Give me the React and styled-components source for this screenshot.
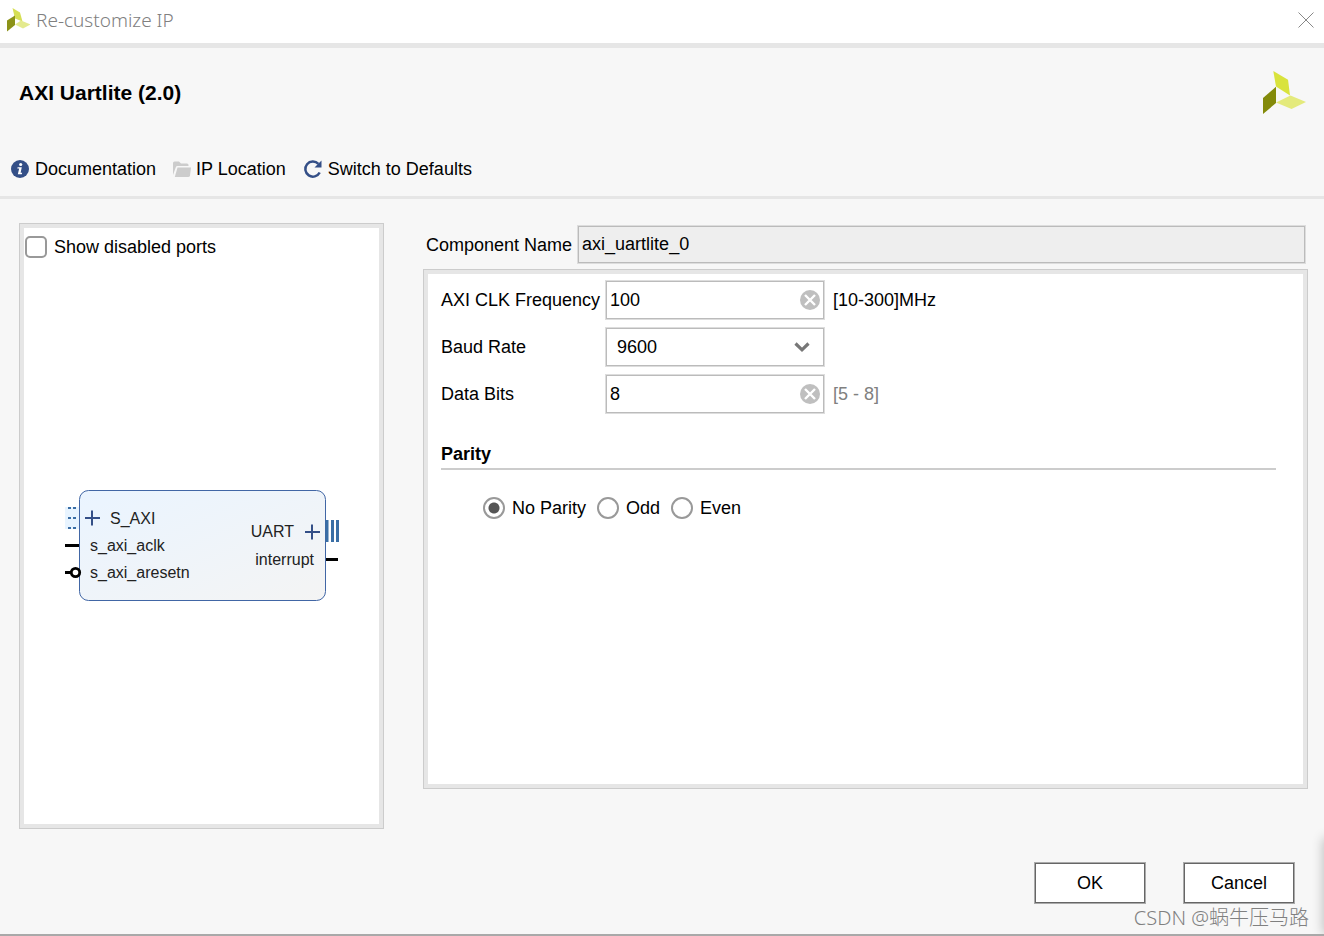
import { useState } from 'react';
import styled, { createGlobalStyle } from 'styled-components';

const GlobalStyle = createGlobalStyle`
  *, *::before, *::after {
    box-sizing: border-box;
  }

  body {
    margin: 0;
    background: #f7f7f7;
    color: #000;
    font-family: 'Liberation Sans', Arial, sans-serif;
    font-size: 18px;
    line-height: 22px;
  }

  input, select, button {
    font: inherit;
    color: inherit;
  }
`;

const Dialog = styled.div`
  position: relative;
  display: flex;
  flex-direction: column;
  min-height: 100vh;
  overflow: hidden;
  border-bottom: 2px solid #a9a9a9;
  background: #f7f7f7;

  /* shadow of the window behind, along the right edge */
  &::after {
    content: '';
    position: absolute;
    right: -8px;
    bottom: 0;
    width: 8px;
    height: 96px;
    box-shadow: 0 0 12px rgba(0, 0, 0, 0.3);
  }
`;

const TitleBar = styled.header`
  display: flex;
  align-items: center;
  gap: 6px;
  height: 48px;
  padding: 0 10px 4px 6px;
  border-bottom: 5px solid #e6e6e6;
  background: #fff;
`;

const WindowTitle = styled.span`
  flex: 1;
  color: #808080;
  font-family: 'Noto Sans', sans-serif;
  font-size: 19px;
  font-weight: 300;
`;

const IconButton = styled.button`
  display: flex;
  padding: 0;
  border: 0;
  background: none;
  cursor: pointer;
`;

const Heading = styled.section`
  display: flex;
  align-items: center;
  justify-content: space-between;
  padding: 23px 18px 0 19px;

  h1 {
    margin: 0;
    font-size: 21px;
    font-weight: 700;
  }
`;

const Toolbar = styled.nav`
  display: flex;
  align-items: center;
  gap: 17px;
  padding: 44px 10px 16px;
  border-bottom: 3px solid #e6e6e6;
`;

const ToolLink = styled.a`
  display: flex;
  align-items: center;
  gap: 5px;
  color: #000;
  text-decoration: none;
`;

const Body = styled.main`
  flex: 1;
  display: grid;
  grid-template-columns: 365px 1fr;
  gap: 39px;
  padding: 24px 16px 0 19px;
`;

const Panel = styled.section`
  display: flex;
  flex-direction: column;
  flex: 1;
  border: 1px solid #ccc;
  background: #fff;
  box-shadow: inset 0 0 0 4px #e6e6e6;
`;

const PortsPanel = styled(Panel)`
  padding: 12px 5px 5px;
`;

const CheckLabel = styled.label`
  display: flex;
  align-items: center;
  gap: 7px;
`;

const Checkbox = styled.input`
  appearance: none;
  width: 22px;
  height: 22px;
  margin: 0;
  border: 2px solid #999;
  border-radius: 5px;
  background: #fff;

  &:checked {
    background: #999;
  }
`;

const Preview = styled.div`
  flex: 1;
  display: flex;
  align-items: center;
  justify-content: center;
  padding: 10px 0 0 2px;
`;

const Settings = styled.div`
  display: flex;
  flex-direction: column;
  padding: 2px 0 40px;
`;

const NameRow = styled.div`
  display: flex;
  align-items: center;
  gap: 5px;
  margin-bottom: 5px;
  padding: 0 2px 0 3px;
`;

const NameInput = styled.input`
  flex: 1;
  min-width: 0;
  height: 39px;
  padding: 0 4px;
  border: 1px solid #ddd;
  background: #eee;
  box-shadow: inset 0 0 0 1px #bbb;
`;

const ParamsPanel = styled(Panel)`
  padding: 10px 31px 10px 17px;
`;

const Params = styled.div`
  display: grid;
  grid-template-columns: 156px 220px 1fr;
  align-items: center;
  column-gap: 8px;
  row-gap: 7px;

  label {
    white-space: nowrap;
  }
`;

const Field = styled.div`
  display: flex;
  align-items: center;
  height: 40px;
  padding: 0 4px 0 1px;
  border: 1px solid #ddd;
  background: #fff;
  box-shadow: inset 0 0 0 1px #bbb;
`;

const FieldInput = styled.input`
  flex: 1;
  min-width: 0;
  height: 36px;
  padding: 0 3px;
  border: 0;
  outline: 0;
  background: none;
`;

const SelectWrap = styled.div`
  position: relative;
  grid-column: 2 / 3;

  svg {
    position: absolute;
    top: 14px;
    right: 15px;
    pointer-events: none;
  }
`;

const Select = styled.select`
  appearance: none;
  display: block;
  width: 100%;
  height: 40px;
  padding: 0 11px;
  border: 1px solid #ddd;
  border-radius: 0;
  background: #fff;
  box-shadow: inset 0 0 0 1px #bbb;
`;

const Range = styled.span`
  color: ${({ $muted }) => ($muted ? '#808080' : '#000')};
`;

const ParityGroup = styled.fieldset`
  margin: 29px 0 0;
  padding: 0;
  border: 0;

  legend {
    width: 100%;
    padding: 0 0 3px;
    border-bottom: 2px solid #ccc;
    font-weight: 700;
  }
`;

const RadioRow = styled.div`
  display: flex;
  gap: 11px;
  padding: 27px 42px 0;

  label {
    display: flex;
    align-items: center;
    gap: 7px;
  }
`;

const Radio = styled.input`
  appearance: none;
  width: 22px;
  height: 22px;
  margin: 0;
  border: 2px solid #999;
  border-radius: 50%;
  background: #fff;

  &:checked {
    background: radial-gradient(circle, #555 5px, #fff 6px);
  }
`;

const Footer = styled.footer`
  display: flex;
  justify-content: flex-end;
  gap: 37px;
  padding: 33px 29px 30px;
`;

const ActionButton = styled.button`
  width: 112px;
  height: 42px;
  padding: 0;
  border: 1px solid #aaa;
  background: #fff;
  box-shadow: inset 0 0 0 1px #666;
  cursor: pointer;
`;

const Watermark = styled.span`
  position: absolute;
  right: 15px;
  bottom: 5px;
  color: #808080;
  font-family: 'Noto Sans', 'Noto Sans CJK SC', sans-serif;
  font-size: 20px;
  font-weight: 300;
  pointer-events: none;
`;

const Logo = ({ size, ...rest }) => (
  <svg width={size} height={size} viewBox="0 0 43 43" aria-hidden="true" {...rest}>
    <path d="M10.3 0 L25 8.7 L27 24.5 L13 15.5 Z" fill="#d9e33c" />
    <path d="M13 15.8 V32 L0 43 V27 Z" fill="#838a0a" />
    <path d="M13 31.5 L27.5 24.5 L43 31 L28.5 38 Z" fill="#e4ea7c" />
  </svg>
);

// the title bar version has wider blades that meet in the middle
const SmallLogo = () => (
  <svg width="24" height="24" viewBox="0 0 24 24" aria-hidden="true">
    <path d="M6.5 0 L14 4.5 L16.5 13.5 L9 10.5 Z" fill="#d6df55" />
    <path d="M9 7.5 V17 L1 23.5 V12.5 Z" fill="#8c9318" />
    <path d="M9 16.5 L15 12.5 L24.5 16.5 L17 20.5 Z" fill="#e4ea8e" />
  </svg>
);

const CloseIcon = () => (
  <svg width="16" height="16" viewBox="0 0 16 16" fill="none" stroke="#888" aria-hidden="true">
    <path d="M0.5 0.5 L15.5 15.5 M15.5 0.5 L0.5 15.5" />
  </svg>
);

const InfoIcon = () => (
  <svg width="20" height="20" viewBox="0 0 20 20" aria-hidden="true">
    <circle cx="10" cy="10" r="9" fill="#344f87" />
    <circle cx="10.7" cy="5.5" r="1.6" fill="#fff" />
    <path d="M7.6 8.2 H11.8 L10.6 13.8 H12.2 L11.8 15.2 H7.8 L9.2 9.6 H7.3 Z" fill="#fff" />
  </svg>
);

const FolderIcon = () => (
  <svg width="18" height="18" viewBox="0 0 18 18" fill="#ccc" aria-hidden="true">
    <path d="M0 15 V3 Q0 1.5 1.5 1.5 H6 L8 3.5 H14 Q15.5 3.5 15.5 5 V6 H4.5 Q3.2 6 2.8 7.2 Z" />
    <path d="M4.5 7.5 H18 L17 15.5 Q16.7 17 15.2 17 H1.8 Z" />
  </svg>
);

const ResetIcon = () => (
  <svg width="20" height="20" viewBox="0 0 20 20" aria-hidden="true">
    <path d="M16.7 13.5 A7.6 7.6 0 1 1 15.4 4.8" fill="none" stroke="#344f87" strokeWidth="2.5" />
    <path d="M18.5 1.5 V8.5 H11.5 Z" fill="#344f87" />
  </svg>
);

const ClearIcon = () => (
  <svg width="20" height="20" viewBox="0 0 20 20" aria-hidden="true">
    <circle cx="10" cy="10" r="10" fill="#bfbfbf" />
    <path d="M5 5 L15 15 M15 5 L5 15" stroke="#fff" strokeWidth="2.4" />
  </svg>
);

const ChevronIcon = () => (
  <svg width="16" height="12" viewBox="0 0 16 12" fill="none" aria-hidden="true">
    <path d="M1.5 2.5 L8 8.8 L14.5 2.5" stroke="#777" strokeWidth="3.2" />
  </svg>
);

const BlockDiagram = () => (
  <svg
    width="276"
    height="112"
    viewBox="0 0 276 112"
    fontFamily="'Liberation Sans', Arial, sans-serif"
    fontSize="16"
    fill="#222"
  >
    <defs>
      <linearGradient id="block" x1="0" y1="0" x2="1" y2="1">
        <stop offset="0" stopColor="#eaf4ff" />
        <stop offset="1" stopColor="#f4f4f4" />
      </linearGradient>
    </defs>
    <rect x="0" y="17" width="14" height="22" fill="#e8f4ff" />
    <path d="M3 18 H11 M3 28 H11 M3 38 H11" stroke="#3a6ea5" strokeWidth="2" strokeDasharray="3 2" />
    <rect x="14.5" y="0.5" width="246" height="110" rx="9" fill="url(#block)" stroke="#4166a5" />
    <path d="M20 28 H35 M27 20.5 V35.5 M240 42 H255 M247 34.5 V49.5" stroke="#344f87" strokeWidth="2" />
    <path d="M0 55.5 H14 M261 69.5 H273 M0 82.5 H6" stroke="#000" strokeWidth="3" />
    <circle cx="10.5" cy="82.5" r="4.2" fill="#fff" stroke="#000" strokeWidth="2.8" />
    <path d="M262 30 V52 M267.5 30 V52 M272.5 30 V52" stroke="#3a6ea5" strokeWidth="3" />
    <text x="45" y="34">S_AXI</text>
    <text x="25" y="61">s_axi_aclk</text>
    <text x="25" y="88">s_axi_aresetn</text>
    <text x="229" y="47" textAnchor="end">UART</text>
    <text x="249" y="75" textAnchor="end">interrupt</text>
  </svg>
);

const ClearableField = ({ id, value, onChange }) => (
  <Field>
    <FieldInput id={id} value={value} onChange={(e) => onChange(e.target.value)} />
    <IconButton type="button" aria-label="Clear" onClick={() => onChange('')}>
      <ClearIcon />
    </IconButton>
  </Field>
);

const PARITY = ['No Parity', 'Odd', 'Even'];

const App = () => {
  const [showDisabled, setShowDisabled] = useState(false);
  const [clock, setClock] = useState('100');
  const [baud, setBaud] = useState('9600');
  const [dataBits, setDataBits] = useState('8');
  const [parity, setParity] = useState('No Parity');

  return (
    <>
      <GlobalStyle />
      <Dialog>
        <TitleBar>
          <SmallLogo />
          <WindowTitle>Re-customize IP</WindowTitle>
          <IconButton type="button" aria-label="Close">
            <CloseIcon />
          </IconButton>
        </TitleBar>

        <Heading>
          <h1>AXI Uartlite (2.0)</h1>
          <Logo size={43} />
        </Heading>

        <Toolbar>
          <ToolLink href="#documentation">
            <InfoIcon />
            Documentation
          </ToolLink>
          <ToolLink href="#location">
            <FolderIcon />
            IP Location
          </ToolLink>
          <ToolLink href="#defaults">
            <ResetIcon />
            Switch to Defaults
          </ToolLink>
        </Toolbar>

        <Body>
          <PortsPanel>
            <CheckLabel>
              <Checkbox
                type="checkbox"
                checked={showDisabled}
                onChange={(e) => setShowDisabled(e.target.checked)}
              />
              Show disabled ports
            </CheckLabel>
            <Preview>
              <BlockDiagram />
            </Preview>
          </PortsPanel>

          <Settings>
            <NameRow>
              <label htmlFor="component-name">Component Name</label>
              <NameInput id="component-name" value="axi_uartlite_0" readOnly />
            </NameRow>

            <ParamsPanel>
              <Params>
                <label htmlFor="clock">AXI CLK Frequency</label>
                <ClearableField id="clock" value={clock} onChange={setClock} />
                <Range>[10-300]MHz</Range>

                <label htmlFor="baud">Baud Rate</label>
                <SelectWrap>
                  <Select id="baud" value={baud} onChange={(e) => setBaud(e.target.value)}>
                    <option>9600</option>
                    <option>19200</option>
                    <option>115200</option>
                  </Select>
                  <ChevronIcon />
                </SelectWrap>
                <span />

                <label htmlFor="data-bits">Data Bits</label>
                <ClearableField id="data-bits" value={dataBits} onChange={setDataBits} />
                <Range $muted>[5 - 8]</Range>
              </Params>

              <ParityGroup>
                <legend>Parity</legend>
                <RadioRow>
                  {PARITY.map((name) => (
                    <label key={name}>
                      <Radio
                        type="radio"
                        name="parity"
                        checked={parity === name}
                        onChange={() => setParity(name)}
                      />
                      {name}
                    </label>
                  ))}
                </RadioRow>
              </ParityGroup>
            </ParamsPanel>
          </Settings>
        </Body>

        <Footer>
          <ActionButton type="button">OK</ActionButton>
          <ActionButton type="button">Cancel</ActionButton>
        </Footer>
        <Watermark>CSDN @蜗牛压马路</Watermark>
      </Dialog>
    </>
  );
};

export default App;
